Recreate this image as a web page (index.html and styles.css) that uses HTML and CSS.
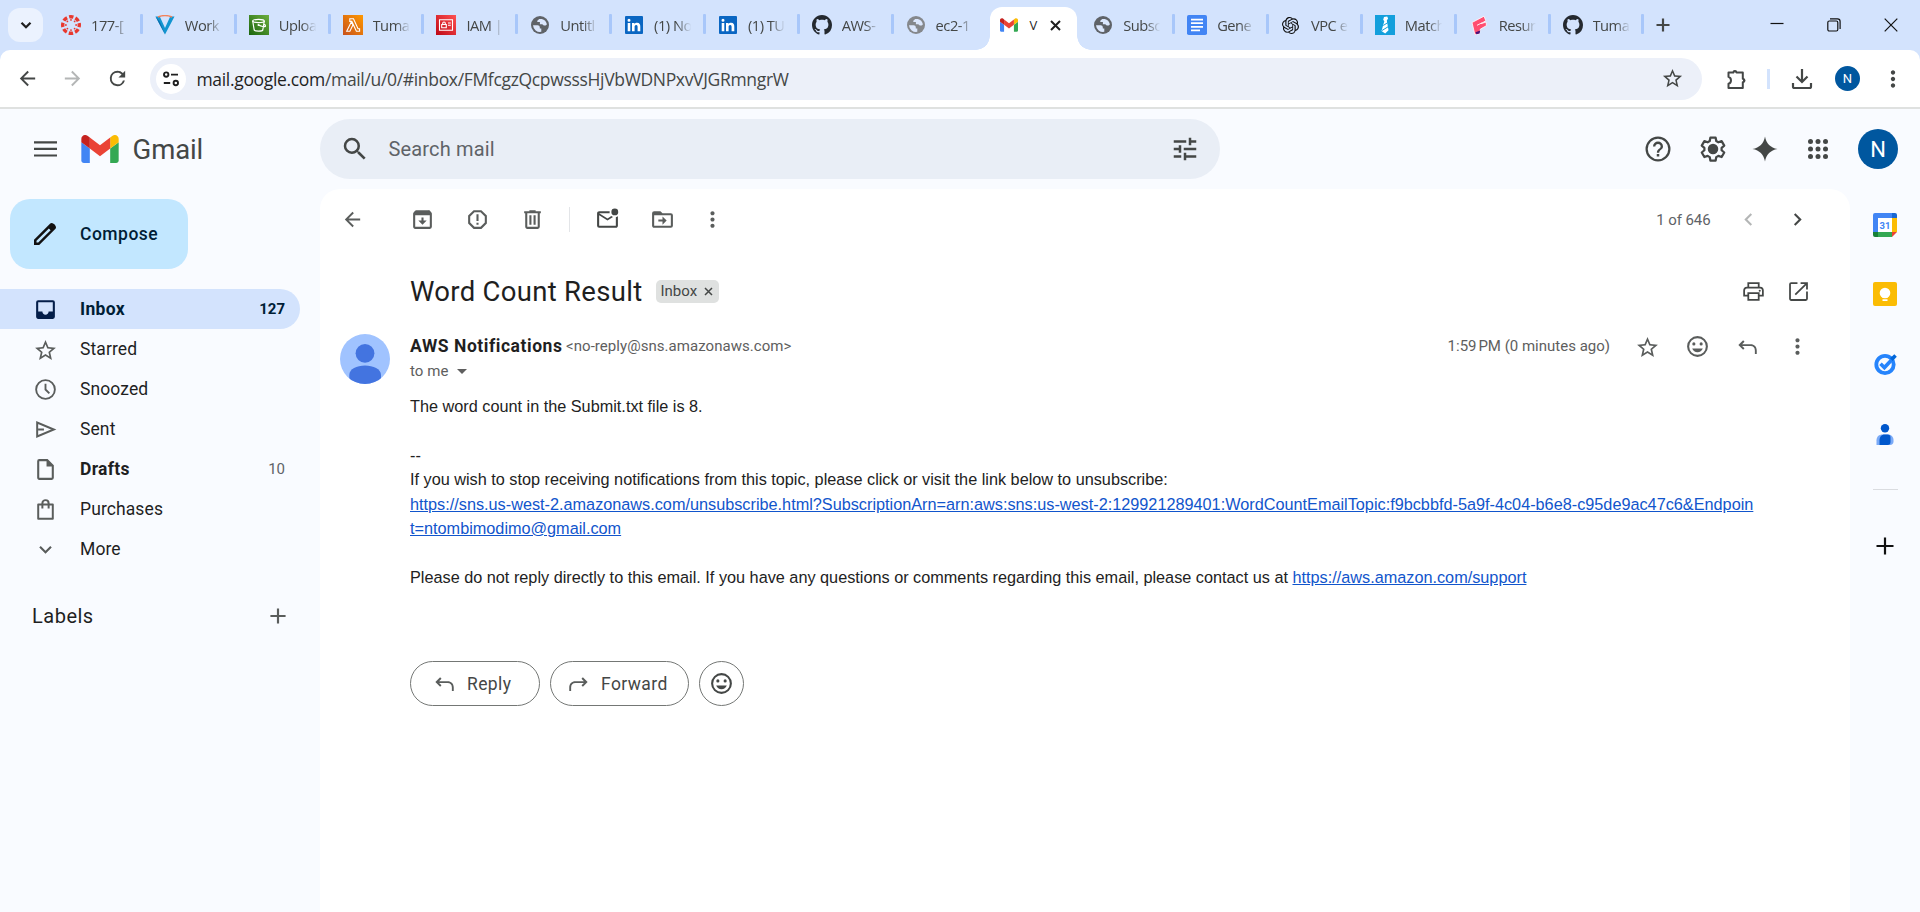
FILE: index.html
```html
<!DOCTYPE html>
<html lang="en">
<head>
<meta charset="utf-8">
<title>Word Count Result - Gmail</title>
<link rel="stylesheet" href="styles.css">
</head>
<body>
<svg class="sprite" aria-hidden="true">
  <symbol id="gmail" viewBox="52 42 88 66"><path fill="#4285f4" d="M58 108h14V74L52 59v43c0 3.32 2.69 6 6 6"/><path fill="#34a853" d="M120 108h14c3.32 0 6-2.69 6-6V59l-20 15"/><path fill="#fbbc04" d="M120 48v26l20-15v-8c0-7.42-8.47-11.65-14.4-7.2"/><path fill="#ea4335" d="M72 74V48l24 18 24-18v26L96 92"/><path fill="#c5221f" d="M52 51v8l20 15V48l-5.6-4.2c-5.94-4.45-14.4-.22-14.4 7.2"/></symbol>
  <symbol id="globe" viewBox="0 0 18 18"><circle cx="9" cy="9" r="9" fill="currentColor"/><path fill="#dbe7fd" d="M2 9.300h4.600c1.300 0 2.200 .8 2.200 2v1.300h1.500v3.200A7 7 0 0 1 2 9.300zM8.200 3h2.600A7 7 0 0 1 15.900 8.300c-.5 1-1.300 1.400-2.300 1.300-1.300-.1-1.500-1.200-2.600-1.400H8.900V6.100H6.300V4.700z"/></symbol>
  <symbol id="github" viewBox="0 0 16 16"><path fill="#24292f" d="M8 0C3.580 0 0 3.580 0 8c0 3.540 2.290 6.530 5.470 7.590.4.070.55-.17.55-.38 0-.19-.01-.82-.01-1.490-2.010.37-2.530-.49-2.690-.94-.09-.23-.48-.94-.82-1.130-.28-.15-.68-.52-.01-.53.63-.01 1.080.58 1.230.82.72 1.210 1.870.87 2.330.66.07-.52.28-.87.51-1.070-1.780-.2-3.640-.89-3.640-3.950 0-.87.31-1.590.82-2.150-.08-.2-.36-1.020.08-2.120 0 0 .67-.21 2.200.82.64-.18 1.320-.27 2-.27s1.360.09 2 .27c1.530-1.040 2.200-.82 2.200-.82.44 1.100.16 1.920.08 2.120.51.56.82 1.270.82 2.150 0 3.070-1.870 3.750-3.650 3.950.29.25.54.73.54 1.480 0 1.070-.01 1.930-.01 2.200 0 .21.15.46.55.38A8.010 8.010 0 0 0 16 8c0-4.420-3.580-8-8-8z"/></symbol>
  <symbol id="linkedin" viewBox="0 0 18 18"><rect width="18" height="18" rx="1" fill="#0a66c2"/><path fill="#fff" d="M2.700 7h2.600v8.300H2.700zM4 2.700a1.500 1.500 0 1 1 0 3 1.500 1.500 0 0 1 0-3zM7 7h2.500v1.200c.5-.9 1.400-1.400 2.600-1.400 2.600 0 3.200 1.700 3.200 3.900v4.600h-2.700v-4.100c0-1 0-2.200-1.400-2.200s-1.600 1-1.600 2.200v4.100H7z"/></symbol>
  <symbol id="star" viewBox="0 0 24 24"><path d="M22 9.240l-7.190-.62L12 2 9.190 8.630 2 9.240l5.460 4.730L5.820 21 12 17.270 18.180 21l-1.630-7.030L22 9.240zM12 15.400l-3.760 2.270 1-4.280-3.320-2.880 4.380-.38L12 6.100l1.710 4.040 4.380.38-3.320 2.880 1 4.280L12 15.400z"/></symbol>
  <symbol id="back" viewBox="0 0 24 24"><path d="M20 11H7.830l5.590-5.590L12 4l-8 8 8 8 1.410-1.410L7.830 13H20z"/></symbol>
  <symbol id="dots" viewBox="0 0 24 24"><path d="M12 8c1.100 0 2-.9 2-2s-.9-2-2-2-2 .9-2 2 .9 2 2 2zm0 2c-1.100 0-2 .9-2 2s.9 2 2 2 2-.9 2-2-.9-2-2-2zm0 6c-1.100 0-2 .9-2 2s.9 2 2 2 2-.9 2-2-.9-2-2-2z"/></symbol>
  <symbol id="reply" viewBox="0 0 20 20"><path d="M6.500 5 2.700 8.800l3.800 3.700 1.100-1.100-1.900-1.800h6.800c2.100 0 3.400 1.400 3.400 3.500V16h1.500v-2.900c0-3-2-5-4.900-5H5.700l1.900-2z"/></symbol>
  <symbol id="smile" viewBox="0 0 24 24"><path d="M12 2a10 10 0 1 0 0 20 10 10 0 0 0 0-20zm0 18a8 8 0 1 1 0-16 8 8 0 0 1 0 16zM8.500 11a1.500 1.500 0 1 0 0-3 1.500 1.500 0 0 0 0 3zm7 0a1.500 1.500 0 1 0 0-3 1.500 1.500 0 0 0 0 3zM12 17.500c2.300 0 4.300-1.400 5.100-3.500H6.900c.8 2.100 2.800 3.500 5.100 3.500z"/></symbol>
  <symbol id="plus" viewBox="0 0 24 24"><path d="M19 13h-6v6h-2v-6H5v-2h6V5h2v6h6z"/></symbol>
  <symbol id="chev" viewBox="0 0 24 24"><path d="M10 6 8.590 7.410 13.170 12l-4.580 4.590L10 18l6-6z"/></symbol>
</svg>

<div class="tabstrip">
  <div class="tabsearch"><svg width="14" height="14" viewBox="0 0 14 14"><path d="M2.500 4.800 7 9.200l4.500-4.400" fill="none" stroke="#1f1f1f" stroke-width="2.300"/></svg></div>
  <div class="tabs">
    <div class="tab"><span class="fav"><svg width="20" height="20" viewBox="0 0 20 20"><g fill="none" stroke="#e8392f"><circle cx="10" cy="10" r="8.300" stroke-width="3.400" stroke-dasharray="4.400 2.120" stroke-dashoffset="2.200"/></g><g fill="#e8392f"><circle cx="10" cy="4.900" r=".9"/><circle cx="10" cy="15.100" r=".9"/><circle cx="4.900" cy="10" r=".9"/><circle cx="15.100" cy="10" r=".9"/><circle cx="6.400" cy="6.400" r=".9"/><circle cx="13.600" cy="6.400" r=".9"/><circle cx="6.400" cy="13.600" r=".9"/><circle cx="13.600" cy="13.600" r=".9"/></g></svg></span><span class="ttl">177-[</span></div>
    <div class="tab"><span class="fav"><svg width="20" height="20" viewBox="0 0 20 20"><path d="M.5 1.500h4.300L10 13l5.200-11.500h4.300L10 19.500z" fill="#1295d0"/><path d="M.5 1.500 10 19.500 5 7z" fill="#0b6fae"/><path d="M3 2c4-1.600 10-1.600 14 0" stroke="#f2825b" stroke-width="1.500" fill="none"/></svg></span><span class="ttl">Work</span></div>
    <div class="tab"><span class="fav"><svg width="20" height="20" viewBox="0 0 20 20"><defs><linearGradient id="gg" x1="0" y1="1" x2="1" y2="0"><stop offset="0" stop-color="#1b660f"/><stop offset="1" stop-color="#6cae3e"/></linearGradient></defs><rect width="20" height="20" fill="url(#gg)"/><g fill="none" stroke="#fff" stroke-width="1.200"><ellipse cx="9.500" cy="6" rx="5.800" ry="1.600"/><path d="M3.700 6l1.500 9c.3 1.400 8.300 1.400 8.600 0l1.500-9M9.500 10c2 1 7 2.700 7 1s-1.800-1.600-2-1.600"/></g><circle cx="9.500" cy="10" r="1" fill="#fff"/></svg></span><span class="ttl">Uploa</span></div>
    <div class="tab"><span class="fav"><svg width="20" height="20" viewBox="0 0 20 20"><defs><linearGradient id="og" x1="0" y1="1" x2="1" y2="0"><stop offset="0" stop-color="#c8511b"/><stop offset="1" stop-color="#f90"/></linearGradient></defs><rect width="20" height="20" fill="url(#og)"/><path d="M3.700 16.300h3.200l3-6.200-1.500-3.300zM6.800 3.700v2.700h2l4.600 9.900h3.200v-2.600h-1.600L10.500 3.700z" fill="none" stroke="#fff" stroke-width="1.100"/></svg></span><span class="ttl">Tuma</span></div>
    <div class="tab"><span class="fav"><svg width="20" height="20" viewBox="0 0 20 20"><defs><linearGradient id="rg" x1="0" y1="1" x2="1" y2="0"><stop offset="0" stop-color="#bd0816"/><stop offset="1" stop-color="#ff5252"/></linearGradient></defs><rect width="20" height="20" fill="url(#rg)"/><g fill="none" stroke="#fff" stroke-width="1.100"><path d="M3.500 4.700h13v10.600h-13zM5.700 9.500h4.600v3.300H5.700zM6.700 9.500V8.300c0-1.700 2.600-1.700 2.600 0v1.200M12 8h2.800M12 10.300h2.800"/></g></svg></span><span class="ttl">IAM |</span></div>
    <div class="tab"><span class="fav g1"><svg width="18" height="18"><use href="#globe"/></svg></span><span class="ttl">Untitl</span></div>
    <div class="tab"><span class="fav"><svg width="18" height="18"><use href="#linkedin"/></svg></span><span class="ttl">(1) N<span class="tail">o</span></span></div>
    <div class="tab"><span class="fav"><svg width="18" height="18"><use href="#linkedin"/></svg></span><span class="ttl">(1) TU</span></div>
    <div class="tab"><span class="fav"><svg width="20" height="20"><use href="#github"/></svg></span><span class="ttl">AWS-</span></div>
    <div class="tab bare"><span class="fav g2"><svg width="18" height="18"><use href="#globe"/></svg></span><span class="ttl">ec2-1</span></div>
    <div class="tab active"><span class="fav"><svg width="18" height="14"><use href="#gmail"/></svg></span><span class="ttl">V</span><svg class="x" width="11" height="11" viewBox="0 0 11 11"><path d="M1 1l9 9M10 1l-9 9" stroke="#1f1f1f" stroke-width="2"/></svg></div>
    <div class="tab"><span class="fav g1"><svg width="18" height="18"><use href="#globe"/></svg></span><span class="ttl">Subsc</span></div>
    <div class="tab"><span class="fav"><svg width="20" height="20" viewBox="0 0 20 20"><rect width="20" height="20" rx="1.800" fill="#4285f4"/><path d="M4 4.600h12M4 8.200h12M4 11.800h12M4 15.400h9" stroke="#fff" stroke-width="1.800"/></svg></span><span class="ttl">Gene</span></div>
    <div class="tab"><span class="fav"><svg width="17" height="17" viewBox="0 0 24 24"><path d="M22.282 9.821a5.985 5.985 0 0 0-.516-4.910 6.046 6.046 0 0 0-6.510-2.900A6.065 6.065 0 0 0 4.981 4.182a5.985 5.985 0 0 0-3.998 2.900 6.046 6.046 0 0 0 .743 7.097 5.980 5.980 0 0 0 .511 4.911 6.051 6.051 0 0 0 6.515 2.900A5.985 5.985 0 0 0 13.260 24a6.056 6.056 0 0 0 5.772-4.206 5.989 5.989 0 0 0 3.998-2.900 6.056 6.056 0 0 0-.748-7.073zm-9.022 12.608a4.476 4.476 0 0 1-2.876-1.041l.142-.080 4.778-2.758a.795.795 0 0 0 .393-.681v-6.737l2.020 1.169a.071.071 0 0 1 .038.052v5.583a4.504 4.504 0 0 1-4.495 4.494zm-9.661-4.125a4.471 4.471 0 0 1-.535-3.014l.142.085 4.783 2.758a.771.771 0 0 0 .781 0l5.843-3.369v2.332a.080.080 0 0 1-.033.062L9.740 19.950a4.499 4.499 0 0 1-6.141-1.646zM2.341 7.896a4.485 4.485 0 0 1 2.365-1.973V11.600a.766.766 0 0 0 .388.677l5.814 3.354-2.020 1.169a.076.076 0 0 1-.071 0l-4.830-2.787A4.504 4.504 0 0 1 2.341 7.872zm16.596 3.856L13.104 8.364 15.119 7.200a.076.076 0 0 1 .071 0l4.830 2.791a4.494 4.494 0 0 1-.677 8.104v-5.677a.790.790 0 0 0-.407-.667zm2.011-3.023l-.142-.085-4.774-2.782a.776.776 0 0 0-.785 0L9.409 9.230V6.897a.066.066 0 0 1 .028-.062l4.830-2.787a4.499 4.499 0 0 1 6.680 4.660zM8.307 12.863l-2.020-1.164a.080.080 0 0 1-.038-.057V6.074a4.499 4.499 0 0 1 7.376-3.454l-.142.081L8.704 5.459a.795.795 0 0 0-.393.681zm1.098-2.365l2.602-1.500 2.607 1.500v2.999l-2.597 1.500-2.607-1.500z" fill="#0d0d0d"/></svg></span><span class="ttl">VPC e</span></div>
    <div class="tab"><span class="fav"><svg width="20" height="20" viewBox="0 0 20 20"><rect width="20" height="20" fill="#139fdc"/><path d="M9 2l3.200-.6.900 2-1.300 2.200 1.700 9.600-3.300 3.400-3.700-2.500L9.300 6.200 8.200 4.800z" fill="#fff"/><path d="M8.300 10.500l4.600-3M7 15.500l6.500-4" stroke="#139fdc"/></svg></span><span class="ttl">Match</span></div>
    <div class="tab"><span class="fav"><svg width="18" height="20" viewBox="0 0 18 20"><path d="M2 7.500 14 1.200l1.800 4.500-4.500 2.800 4.900-1.400.2 3.600-6 3.400-1 4.700-4.600.6z" fill="#ff4f71" stroke="#fff" stroke-width=".8"/><path d="M7 10.300l5-2.500" stroke="#fff" stroke-width=".9"/><path d="M5.500 17.300l4.700-1.800-.6 3-3.200.7z" fill="#4b1178"/></svg></span><span class="ttl">Resur</span></div>
    <div class="tab"><span class="fav"><svg width="20" height="20"><use href="#github"/></svg></span><span class="ttl">Tuma</span></div>
  </div>
  <svg class="newtab" width="14" height="14" viewBox="0 0 14 14"><path d="M7 .5v13M.5 7h13" stroke="#444746" stroke-width="2.200"/></svg>
  <div class="winctl">
    <svg width="14" height="14" viewBox="0 0 14 14"><path d="M.5 5.500h13" stroke="#111" stroke-width="1.200"/></svg>
    <svg width="14" height="14" viewBox="0 0 14 14"><g fill="none" stroke="#111" stroke-width="1.200"><rect x=".8" y="3" width="10" height="10" rx="1.500"/><path d="M3 .8h7.500c1.600 0 2.600 1 2.600 2.600V11"/></g></svg>
    <svg width="14" height="14" viewBox="0 0 14 14"><path d="M.7.7l12.600 12.600M13.300.7.7 13.300" stroke="#111" stroke-width="1.200"/></svg>
  </div>
</div>

<div class="toolbarwrap">
<div class="toolbar">
  <div class="navbtns">
    <svg width="23" height="23" class="dk"><use href="#back"/></svg>
    <svg width="23" height="23" class="flip lt"><use href="#back"/></svg>
    <svg width="23" height="23" viewBox="0 0 24 24" class="dk"><path d="M17.650 6.350A7.960 7.960 0 0 0 12 4a8 8 0 1 0 7.730 10h-2.080A6 6 0 1 1 12 6c1.660 0 3.140.69 4.220 1.780L13 11h7V4z"/></svg>
  </div>
  <div class="omnibox">
    <span class="site"><svg width="18" height="16" viewBox="0 0 18 16"><g fill="none" stroke="#1f1f1f" stroke-width="1.900"><circle cx="4.200" cy="3.600" r="2.200"/><path d="M9 3.600h7M1.800 12h6.400"/><circle cx="13.800" cy="12" r="2.200"/></g></svg></span>
    <span class="url"><b>mail.google.com</b>/mail/u/0/#inbox/FMfcgzQcpwsssHjVbWDNPxvVJGRmngrW</span>
    <svg width="23" height="23" class="dk"><use href="#star"/></svg>
  </div>
  <div class="exts">
    <svg class="puz" width="24" height="24" viewBox="0 0 24 24"><path d="M4.500 5.500h4.800c.3-2 2.800-2 3.200 0h6.300v6.300c2.300.4 2.300 3 0 3.400V21H4.500v-4.200c3.300-.9 3.300-5.900 0-6.900z" fill="none" stroke="#444746" stroke-width="2" stroke-linejoin="round"/><path d="M9 5.200a2.200 2.200 0 0 1 4.300 0zM19 11.300a2.400 2.400 0 0 1 0 4.600z" fill="#444746"/></svg>
    <i class="vr"></i>
    <svg width="22" height="22" viewBox="0 0 22 22"><path d="M11 1v12.500M5.500 8.500l5.500 5.500 5.500-5.500M2 15v3.400c0 .9.600 1.600 1.500 1.600h15c.9 0 1.500-.7 1.500-1.600V15" fill="none" stroke="#444746" stroke-width="2.200"/></svg>
    <span class="av sm">N</span>
    <svg class="dk" width="26" height="26"><use href="#dots"/></svg>
  </div>
</div>
</div>

<div class="gmail">
  <header class="top">
    <svg class="burger" width="23" height="16" viewBox="0 0 23 16"><path d="M0 1.300h23M0 7.900h23M0 14.500h23" stroke="#444746" stroke-width="2.200"/></svg>
    <svg class="logo" width="38" height="28"><use href="#gmail"/></svg>
    <span class="brand">Gmail</span>
    <div class="search">
      <svg width="30" height="30" viewBox="0 0 24 24" class="dk"><path d="M15.500 14h-.79l-.28-.27A6.470 6.470 0 0 0 16 9.500 6.500 6.500 0 1 0 9.500 16c1.610 0 3.090-.59 4.230-1.570l.27.28v.79l5 4.990L20.490 19zm-6 0a4.500 4.500 0 1 1 0-9 4.500 4.500 0 0 1 0 9z"/></svg>
      <span class="ph">Search mail</span>
      <svg width="30" height="30" viewBox="0 0 24 24" class="dk"><path d="M3 17v2h6v-2zM3 5v2h10V5zm10 16v-2h8v-2h-8v-2h-2v6zM7 9v2H3v2h4v2h2V9zm14 4v-2H11v2zm-6-4h2V7h4V5h-4V3h-2z"/></svg>
    </div>
    <div class="actions">
      <svg width="30" height="30" viewBox="0 0 24 24" class="dk"><path d="M11 18h2v-2h-2zm1-16a10 10 0 1 0 0 20 10 10 0 0 0 0-20zm0 18.200a8.200 8.200 0 1 1 0-16.400 8.200 8.200 0 0 1 0 16.400zM12 6a4 4 0 0 0-4 4h1.900a2.100 2.100 0 1 1 4.200 0c0 2-3 1.750-3 5H13c0-2.250 3-2.500 3-5a4 4 0 0 0-4-4z"/></svg>
      <svg class="gear" width="30" height="30" viewBox="0 0 24 24"><path d="M9.900 2.900h4.200l.5 2.700 1.700 1 2.600-.9 2.100 3.600-2.100 1.800v1.900l2.100 1.800-2.100 3.600-2.600-.9-1.700 1-.5 2.700H9.900l-.5-2.700-1.700-1-2.600.9L3 14.800 5.100 13v-1.900L3 9.300l2.100-3.600 2.600.9 1.700-1z" fill="none" stroke="#444746" stroke-width="1.800" stroke-linejoin="round"/><circle cx="12" cy="12" r="4.200" fill="#444746"/></svg>
      <svg width="30" height="30" viewBox="0 0 24 24" class="dk"><path d="M12 2c1 5.600 4.400 9 10 10-5.600 1-9 4.400-10 10-1-5.600-4.400-9-10-10 5.600-1 9-4.400 10-10z"/></svg>
      <svg width="30" height="30" viewBox="0 0 24 24" class="dk"><circle cx="6" cy="6" r="2"/><circle cx="12" cy="6" r="2"/><circle cx="18" cy="6" r="2"/><circle cx="6" cy="12" r="2"/><circle cx="12" cy="12" r="2"/><circle cx="18" cy="12" r="2"/><circle cx="6" cy="18" r="2"/><circle cx="12" cy="18" r="2"/><circle cx="18" cy="18" r="2"/></svg>
      <span class="av">N</span>
    </div>
  </header>

  <div class="main">
    <nav class="side">
      <div class="compose"><svg width="30" height="30" viewBox="0 0 24 24"><path d="M3.200 20.800v-4.200L16.200 3.600c1.800-1.800 6 2.400 4.200 4.200L7.400 20.800zM5.200 18.800h1.400L16.500 8.900l-1.400-1.400L5.200 17.400z" fill="#111" fill-rule="evenodd"/></svg><span>Compose</span></div>
      <div class="item sel"><svg width="25" height="25" viewBox="0 0 24 24"><path fill="#041e49" d="M19 3H5a2 2 0 0 0-2 2v14c0 1.100.9 2 2 2h14a2 2 0 0 0 2-2V5a2 2 0 0 0-2-2zm0 11h-4c0 1.660-1.350 3-3 3s-3-1.340-3-3H5V5h14z"/></svg><span class="lb">Inbox</span><span class="ct">127</span></div>
      <div class="item"><svg class="soft st" width="25" height="25"><use href="#star"/></svg><span class="lb">Starred</span></div>
      <div class="item"><svg width="25" height="25" viewBox="0 0 24 24"><g fill="none" stroke="#5a5d5c" stroke-width="1.800"><circle cx="12" cy="12" r="9"/><path d="M12 6.500V12l3.700 3.700"/></g></svg><span class="lb">Snoozed</span></div>
      <div class="item"><svg width="25" height="25" viewBox="0 0 24 24"><path d="M4 5.300v13.400L20 12zM5 12h5.500" fill="none" stroke="#5a5d5c" stroke-width="1.900"/></svg><span class="lb">Sent</span></div>
      <div class="item bold"><svg width="25" height="25" viewBox="0 0 24 24"><path class="soft" d="M14 2H6a2 2 0 0 0-2 2v16c0 1.100.9 2 2 2h12a2 2 0 0 0 2-2V8zm4 18H6V4h7v5h5z"/></svg><span class="lb">Drafts</span><span class="ct">10</span></div>
      <div class="item"><svg width="25" height="25" viewBox="0 0 24 24"><path d="M5 7.200h14v13.600H5zM9 11V6c0-4 6-4 6 0v5" fill="none" stroke="#5a5d5c" stroke-width="1.900" stroke-linejoin="round"/></svg><span class="lb">Purchases</span></div>
      <div class="item"><svg class="soft down" width="25" height="25"><use href="#chev"/></svg><span class="lb">More</span></div>
      <div class="labels"><span>Labels</span><svg class="soft" width="26" height="26"><use href="#plus"/></svg></div>
    </nav>

    <section class="card">
      <div class="bar">
        <svg class="soft" width="23" height="23"><use href="#back"/></svg>
        <svg class="soft i-arc" width="25" height="25" viewBox="0 0 24 24"><path d="m20.540 5.230-1.390-1.680A1.450 1.450 0 0 0 18 3H6c-.47 0-.88.210-1.160.55L3.460 5.230C3.170 5.570 3 6.020 3 6.500V19c0 1.100.9 2 2 2h14a2 2 0 0 0 2-2V6.500c0-.48-.17-.93-.46-1.270zM5 19V8h14v11zm8-9h-2v3H8l4 4 4-4h-3z"/></svg>
        <svg class="soft i-spam" width="25" height="25" viewBox="0 0 24 24"><path d="M15.730 3H8.270L3 8.270v7.460L8.270 21h7.460L21 15.730V8.270zM19 14.900 14.900 19H9.100L5 14.900V9.100L9.100 5h5.800L19 9.100zM11 7h2v6.500h-2zm0 8h2v2h-2z"/></svg>
        <svg class="soft i-del" width="25" height="25" viewBox="0 0 24 24"><path d="M15 4V3H9v1H4v2h1v13c0 1.100.9 2 2 2h10a2 2 0 0 0 2-2V6h1V4zm2 15H7V6h10zM9 8h2v9H9zm4 0h2v9h-2z"/></svg>
        <i class="sep"></i>
        <svg class="dk" width="25" height="25" viewBox="0 0 24 24"><path d="M22 8.980V18c0 1.100-.9 2-2 2H4a2 2 0 0 1-2-2V6c0-1.100.9-2 2-2h10.100a5 5 0 0 0 0 2H4l8 5 3.670-2.290c.47.43 1.020.76 1.630.98L12 13 4 8v10h16V9.900a4.900 4.900 0 0 0 2-.92z"/><circle cx="19" cy="4.700" r="3.300"/></svg>
        <svg class="soft i-mov" width="25" height="25" viewBox="0 0 24 24"><path d="M20 6h-8l-2-2H4a2 2 0 0 0-2 2v12c0 1.100.9 2 2 2h16a2 2 0 0 0 2-2V8a2 2 0 0 0-2-2zm0 12H4V8h16zm-8-1 4-4-4-4v3H8v2h4z"/></svg>
        <svg class="soft" width="25" height="25"><use href="#dots"/></svg>
        <span class="pos">1 of 646</span>
        <svg class="lt flip i-prev" width="25" height="25"><use href="#chev"/></svg>
        <svg class="dk" width="25" height="25"><use href="#chev"/></svg>
      </div>
      <div class="subject">
        <h2>Word Count Result</h2>
        <span class="chip">Inbox<svg width="9" height="9" viewBox="0 0 9 9"><path d="M1 1l7 7M8 1 1 8" stroke="#444746" stroke-width="1.500"/></svg></span>
        <svg class="i-print" width="25" height="25" viewBox="0 0 24 24"><g fill="none" stroke="#444746" stroke-width="1.700"><path d="M7 8V4h10v4M7 16H3V11c0-1.700 1-2.800 2.600-2.800h12.800c1.600 0 2.600 1.100 2.600 2.800v5h-4"/><path d="M7 13.500h10V20H7z"/></g><circle cx="18" cy="11.300" r="1" fill="#444746"/></svg>
        <svg class="dk" width="25" height="25" viewBox="0 0 24 24"><path d="M19.300 19.300H4.700V4.700H11V3H5a2 2 0 0 0-2 2v14c0 1.100.9 2 2 2h14a2 2 0 0 0 2-2v-7h-1.700zM14 3v1.700h4.100l-9.800 9.800 1.200 1.200 9.800-9.800V10H21V3z"/></svg>
      </div>
      <div class="msg">
        <svg class="face" width="50" height="50" viewBox="0 0 50 50"><defs><clipPath id="fc"><circle cx="25" cy="25" r="25"/></clipPath></defs><g clip-path="url(#fc)"><rect width="50" height="50" fill="#a0c3ff"/><circle cx="25" cy="19.300" r="9.400" fill="#4374e0"/><path d="M9.300 50V41c0-6 7.500-9.500 15.700-9.500S41 35 41 41v9z" fill="#4374e0"/></g></svg>
        <div class="mcol">
          <div class="from">
            <b class="name">AWS Notifications</b><span class="addr">&lt;no-reply@sns.amazonaws.com&gt;</span>
            <span class="time">1:59&#8239;PM (0 minutes ago)</span>
            <svg class="soft st" width="25" height="25"><use href="#star"/></svg>
            <svg class="soft" width="25" height="25"><use href="#smile"/></svg>
            <svg class="soft" width="25" height="25"><use href="#reply"/></svg>
            <svg class="soft" width="25" height="25"><use href="#dots"/></svg>
          </div>
          <div class="to">to me<i></i></div>
          <div class="body">
            <p>The word count in the Submit.txt file is 8.</p>
            <p class="dash">--</p>
            <p>If you wish to stop receiving notifications from this topic, please click or visit the link below to unsubscribe:</p>
            <p><a>https://sns.us-west-2.amazonaws.com/unsubscribe.html?SubscriptionArn=arn:aws:sns:us-west-2:129921289401:WordCountEmailTopic:f9bcbbfd-5a9f-4c04-b6e8-c95de9ac47c6&amp;Endpoin<br>t=ntombimodimo@gmail.com</a></p>
            <p class="last">Please do not reply directly to this email. If you have any questions or comments regarding this email, please contact us at <a>https://aws.amazon.com/support</a></p>
          </div>
          <div class="btns">
            <span class="btn b1"><svg class="soft" width="25" height="25"><use href="#reply"/></svg><em>Reply</em></span>
            <span class="btn b2"><svg class="soft flip" width="25" height="25"><use href="#reply"/></svg><em>Forward</em></span>
            <span class="btn b3"><svg class="dk" width="25" height="25"><use href="#smile"/></svg></span>
          </div>
        </div>
      </div>
    </section>

    <aside class="panel">
      <svg width="24" height="24" viewBox="0 0 24 24"><path fill="#4285f4" d="M2 0h17v5H5v14H0V2a2 2 0 0 1 2-2z"/><path fill="#1967d2" d="M19 0h3a2 2 0 0 1 2 2v3h-5z"/><path fill="#fbbc04" d="M19 5h5v14h-5z"/><path fill="#34a853" d="M5 19h14v5H5z"/><path fill="#188038" d="M0 19h5v5H2a2 2 0 0 1-2-2z"/><path fill="#ea4335" d="M19 19h5l-5 5z"/><path fill="#fff" d="M5 5h14v14H5z"/><text x="12" y="15.700" text-anchor="middle" class="cal">31</text></svg>
      <svg width="24" height="24" viewBox="0 0 24 24"><rect width="24" height="24" rx="2" fill="#fbbc04"/><circle cx="12" cy="11" r="5.300" fill="#fff"/><path fill="#fff" d="M9.500 13h5v3h-5zM9.500 17.200h5V19h-5z"/></svg>
      <svg width="24" height="24" viewBox="0 0 24 24"><circle cx="12" cy="12.500" r="8.700" fill="none" stroke="#2684fc" stroke-width="3.800"/><path d="M7.500 11.800l3.900 3.800 7.600-8" fill="none" stroke="#2684fc" stroke-width="3.600"/><path d="M17 6.300 21.300 2.300l2.500 2.500-4.100 4.100z" fill="#0066da"/></svg>
      <svg width="24" height="24" viewBox="0 0 24 24"><path fill="#7baaf7" d="M3.500 23v-4.500c0-4 2.500-6 6-6h5c3.500 0 6 2 6 5.500v1.500c0 2-1.300 3.500-3.500 3.500z"/><path fill="#0057cc" d="M6.500 23v-4.500c0-3.800 2-6 5-6h3c2 0 3 1 3 3V20c0 1.800-1 3-3 3z"/><circle cx="12" cy="6.200" r="4.200" fill="#0057cc"/></svg>
      <i></i>
      <svg class="add" width="18" height="18" viewBox="0 0 18 18"><path d="M9 .5v17M.5 9h17" stroke="#111" stroke-width="2.200"/></svg>
    </aside>
  </div>
</div>
</body>
</html>
```
FILE: styles.css
```css
* { box-sizing: border-box; }
body { margin: 0; width: 1920px; height: 912px; overflow: hidden; display: flex; flex-direction: column; background: #f9fbff; font-family: Roboto, "Liberation Sans", sans-serif; color: #1f1f1f; }
svg { display: block; flex: none; }
p, h2 { margin: 0; }
em, i { font-style: normal; }
.sprite { position: absolute; width: 0; height: 0; }
.dk { fill: #444746; }
.soft { fill: #5a5d5c; }
.lt { fill: #b4b6b6; }
.flip { transform: scaleX(-1); }
.down { transform: rotate(90deg); }

/* tab strip */
.tabstrip { height: 50px; flex: none; background: #d3e3fd; display: flex; align-items: center; padding-left: 8px; font-family: "Open Sans", "Noto Sans", sans-serif; }
.tabsearch { width: 35px; height: 34px; border-radius: 12px; background: #ebf2fe; display: flex; align-items: center; justify-content: center; }
.tabs { display: flex; margin-left: 6px; height: 50px; }
.tab { width: 93.85px; height: 50px; display: flex; align-items: center; padding-left: 12px; position: relative; }
.tab::after { content: ""; position: absolute; right: 0; top: 14px; width: 3px; height: 20px; border-radius: 1px; background: #a8c7fa; }
.fav { width: 20px; flex: none; display: flex; justify-content: center; }
.g1 { color: #5f6368; }
.g2 { color: #85888c; }
.ttl { margin-left: 10px; width: 38px; white-space: nowrap; font-size: 14.700px; letter-spacing: -.5px; color: #444746; -webkit-mask-image: linear-gradient(90deg, #000 60%, transparent 98%); mask-image: linear-gradient(90deg, #000 60%, transparent 98%); }
.bare::after { display: none; }
.active { z-index: 1; }
.active::before { content: ""; position: absolute; z-index: -1; left: 3px; top: 7px; width: 87px; height: 43px; background: #fff; border-radius: 12px 12px 0 0; }
.active::after { z-index: -1; left: -11px; right: auto; top: 36px; width: 115px; height: 14px; border-radius: 0; background: radial-gradient(circle at 0 0, transparent 13.500px, #fff 14px) left / 14px 14px no-repeat, radial-gradient(circle at 100% 0, transparent 13.500px, #fff 14px) right / 14px 14px no-repeat; }
.active .ttl { width: 9px; margin-left: 10px; -webkit-mask-image: none; mask-image: none; color: #1f1f1f; font-size: 13px; }
.active .x { margin-left: 12px; }
.newtab { margin-left: 12px; }
.winctl { margin-left: auto; margin-right: 22px; display: flex; gap: 43px; }

/* address bar */
.toolbarwrap { background: #d3e3fd; flex: none; }
.toolbar { height: 59px; background: #fff; border-radius: 10px 10px 0 0; border-bottom: 2px solid #dfe1e0; display: flex; align-items: center; }
.navbtns { display: flex; gap: 22px; margin-left: 16px; }
.omnibox { margin-left: 21px; width: 1552px; height: 42px; border-radius: 21px; background: #ecf0f9; display: flex; align-items: center; padding: 0 18.500px 0 6px; }
.site { width: 30px; height: 30px; border-radius: 50%; background: #fff; display: flex; align-items: center; justify-content: center; }
.url { flex: 1; margin-left: 10.500px; font: 17.500px "Open Sans", "Noto Sans", sans-serif; letter-spacing: -.33px; color: #444746; }
.url b { font-weight: 400; color: #1f1f1f; }
.exts { display: flex; align-items: center; flex: 1; }
.puz { margin-left: 22px; }
.vr { width: 3px; height: 20px; background: #d3e3fd; margin: 0 21px 0 19px; }
.av { width: 40px; height: 40px; border-radius: 50%; background: #00579f; color: #fff; display: flex; align-items: center; justify-content: center; font-size: 22px; }
.sm { width: 25px; height: 25px; font-size: 13px; margin: 0 19.500px 0 22px; }

/* mail header */
.gmail { flex: 1; display: flex; flex-direction: column; min-height: 0; }
.top { height: 80px; flex: none; display: flex; align-items: center; }
.burger { margin-left: 33.500px; }
.logo { margin-left: 24px; }
.brand { margin-left: 14px; width: 188px; font-size: 27.500px; letter-spacing: -.1px; color: #444746; }
.search { width: 900px; height: 60px; margin-left: -.5px; border-radius: 30px; background: #e9eef6; display: flex; align-items: center; padding: 0 20px; }
.ph { flex: 1; margin-left: 18.500px; font-size: 20px; letter-spacing: .15px; color: #5f6368; }
.actions { margin-left: auto; padding-right: 22px; display: flex; align-items: center; }
.actions svg + svg { margin-left: 23px; }
.actions svg + .gear { margin-left: 25px; }
.actions .gear + svg { margin-left: 22px; }
.actions .av { margin-left: 25px; }

.main { flex: 1; display: flex; min-height: 0; }
.side { width: 320px; flex: none; }
.compose { margin: 10px 0 20px 10px; width: 178px; height: 70px; border-radius: 20px; background: #c2e7ff; display: flex; align-items: center; padding-left: 20px; font-size: 17.500px; font-weight: 500; letter-spacing: .5px; color: #001d35; }
.compose span { margin-left: 20px; }
.item { height: 40px; width: 300px; display: flex; align-items: center; padding: 0 15px 0 33px; border-radius: 0 20px 20px 0; font-size: 17.500px; letter-spacing: .1px; color: #1f1f1f; }
.lb { margin-left: 22px; flex: 1; }
.ct { font-size: 15px; letter-spacing: 0; }
.sel { background: #d3e3fd; font-weight: 700; color: #001d35; }
.sel .lb, .bold .lb { font-weight: 700; letter-spacing: .3px; }
.bold .ct { color: #5f6368; }
.st { position: relative; top: 1px; }
.labels { display: flex; justify-content: space-between; align-items: center; margin-top: 34px; padding: 0 29.500px 0 32px; font-size: 20px; font-weight: 450; letter-spacing: .5px; }

/* message */
.card { width: 1530px; flex: none; background: #fff; border-radius: 20px 20px 0 0; padding-top: 18px; }
.bar { display: flex; align-items: center; height: 25px; padding: 0 40.500px 0 21px; }
.i-arc { margin-left: 46px; }
.i-spam, .i-del, .i-mov { margin-left: 30px; }
.sep { width: 1px; height: 25px; background: #e3e5e8; margin: 0 25px 0 24px; }
.i-mov { margin-right: 25px; }
.pos { margin-left: auto; font-size: 15px; letter-spacing: -.1px; color: #5f6368; }
.i-prev { margin: 0 24px 0 25px; }
.subject { display: flex; align-items: center; height: 40px; margin-top: 39px; padding: 0 39.500px 0 90px; }
.subject h2 { font-size: 27.500px; font-weight: 400; letter-spacing: .3px; white-space: nowrap; }
.chip { margin-left: 14px; width: 63px; height: 23px; border-radius: 5px; background: #dfe1e0; color: #444746; font-size: 15px; display: flex; align-items: center; padding-left: 4px; }
.chip svg { margin-left: 7px; }
.i-print { margin-left: auto; margin-right: 20px; }
.msg { display: flex; padding: 23px 40.500px 0 20px; }
.face { margin-right: 20px; }
.mcol { flex: 1; min-width: 0; }
.from { display: flex; align-items: center; height: 25px; white-space: nowrap; }
.name { font-size: 17.500px; letter-spacing: .55px; line-height: 20px; margin-bottom: 2px; }
.addr { margin-left: 3.500px; font-size: 15px; letter-spacing: .05px; color: #5e5e5e; margin-bottom: 1px; }
.time { margin-left: auto; margin-right: -.5px; margin-bottom: 1px; font-size: 15px; color: #5e5e5e; }
.from svg { margin-left: 25px; }
.to { height: 25px; display: flex; align-items: center; font-size: 15px; letter-spacing: .1px; color: #5e5e5e; padding-bottom: 1px; }
.to i { margin-left: 8px; border: 5px solid transparent; border-top-color: #5e5e5e; border-bottom: 0; }
.body { font: 16.250px/24.375px "Liberation Sans", Arial, sans-serif; color: #222; padding-top: 10px; white-space: nowrap; }
.body a { color: #15c; text-decoration: underline; }
.dash { margin-top: 24.375px; }
.last { margin-top: 24.375px; }
.btns { display: flex; gap: 10px; margin-top: 72px; }
.btn { height: 45px; border: 1px solid #747775; border-radius: 23px; display: flex; align-items: center; color: #444746; font-size: 17.500px; font-weight: 450; }
.btn em { margin-left: 10px; letter-spacing: .4px; }
.b1 { width: 130px; padding-left: 21px; }
.b2 { width: 139px; padding-left: 15px; }
.b3 { width: 45px; justify-content: center; }

/* side panel */
.panel { flex: 1; display: flex; flex-direction: column; align-items: center; padding-top: 23.500px; gap: 45.800px; }
.panel i { width: 25px; height: 1px; background: #dadce0; margin-top: -2.500px; }
.add { margin-top: 1px; }
.cal { font: 700 9.500px Roboto, sans-serif; fill: #4285f4; }
```
